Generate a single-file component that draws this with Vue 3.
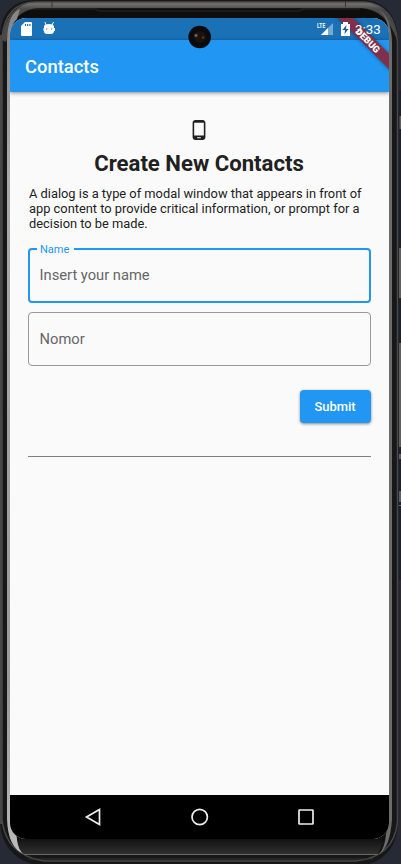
<script setup>
import { ref } from 'vue'
const name = ref('')
const number = ref('')
</script>

<template>
  <div class="stage">
    <svg class="frame" width="401" height="864" viewBox="0 0 401 864" aria-hidden="true">
      <defs>
        <linearGradient id="topBand" gradientUnits="userSpaceOnUse" x1="0" y1="1" x2="0" y2="9">
          <stop offset="0" stop-color="#333" /><stop offset=".35" stop-color="#737170" /><stop offset="1" stop-color="#4c4a49" />
        </linearGradient>
        <linearGradient id="bottomBand" x1="0" y1="0" x2="0" y2="1">
          <stop offset="0" stop-color="#101010" /><stop offset="1" stop-color="#303030" />
        </linearGradient>
        <linearGradient id="shineLeft" x1="0" y1="0" x2="0" y2="1">
          <stop offset="0" stop-color="#858585" /><stop offset=".2" stop-color="#aaa" /><stop offset=".8" stop-color="#999" /><stop offset="1" stop-color="#bbb" />
        </linearGradient>
      </defs>
      <rect width="401" height="864" fill="#252a35" />
      <rect x="399" y="90" width="2" height="490" fill="#19202e" />
      <path d="M0 33Q3 1 34 0H366Q397 4 398.5 42V822Q396 862 358 866H40Q3 859 0 823Z" fill="#171717" />
      <path d="M2 38Q5 3 35 2H365Q395 5 397.500 42V822Q394 857 356 861H44Q6 855 2 820Z" fill="none" stroke="#484848" stroke-width="1.500" />
      <path d="M0 35V824" stroke="#474747" stroke-width="4" />
      <path d="M2 40Q6 4 36 2H364Q393 5 397 40Q386 9 361 8H40Q11 9 6 42Z" fill="url(#topBand)" />
      <path d="M52 1V7M345.500 1V7" stroke="#343434" />
      <path d="M37 9H363Q388 11 391 41V819Q389 851 354 854H46Q14 851 7 819V41Q11 12 37 9Z" fill="#0d0d0d" />
      <path d="M20 9Q8 13 7 40V819Q8 848 24 854Q18 849 16 833L10 823V36Q11 24 17 19Z" fill="url(#shineLeft)" />
      <path d="M378 10Q388 15 389 37V824L386 834Q385 848 379 854Q390 848 392 819V42Q391 15 378 10Z" fill="#6c6c6c" />
      <path d="M34 9H95L99 11H300L303 9H360" stroke="#292929" fill="none" />
      <path d="M20 838H382Q381 851 377 854H24Q18 851 17 838Z" fill="url(#bottomBand)" />
      <path d="M24 854.500H378" stroke="#676767" />
      <path d="M29 859H373" stroke="#353535" />
      <path d="M400.500 116V129M400 248V298M400 343V447M400 454V459M400 491V502" stroke="#5e5e5e" stroke-width="2" />
      <path d="M399 505.500H401" stroke="#4778bb" />
    </svg>

    <main class="screen">
      <div class="status">
        <svg class="sd" width="12" height="15" viewBox="0 0 12 15"><path d="M4 0H10Q11 0 11 1V13Q11 14 10 14H1Q0 14 0 13V4Z" fill="#fff" /><path d="M4.500 2V4M6.700 2V4M8.900 2V4" stroke="#1b71b6" stroke-width="1.200" /></svg>
        <svg class="android" width="13" height="14" viewBox="0 0 13 14"><path d="M3 3L2 0M9 3L10.500 0" stroke="#fff" /><path d="M1 4Q2 2 6 2Q10 2 11 4V10Q10 12 8 12H4Q1 12 1 9Z" fill="#fff" /><path d="M0 6V9M11.500 6V9" stroke="#fff" /><path d="M3 7H4.200M8 7H9.200" stroke="#1b71b6" stroke-width="1.200" /></svg>
        <span class="lte">LTE</span>
        <svg class="signal" width="12" height="12" viewBox="0 0 12 12"><path d="M12 0V12H0Z" fill="#76aad3" /><path d="M7 5V12H0Z" fill="#fff" /></svg>
        <svg class="battery" width="9" height="14" viewBox="0 0 9 14"><path d="M0 2H2V0H7V2H9V14H0Z" fill="#fff" /><path d="M5.500 3L1.500 8H4L3.500 12L7.500 7H5Z" fill="#195b94" /></svg>
        <span class="time">3:33</span>
      </div>
      <header class="bar">Contacts</header>
      <section class="content">
        <svg class="phone" width="24" height="24" viewBox="0 0 24 24"><path d="M16 1H8C6.340 1 5 2.340 5 4v16c0 1.660 1.340 3 3 3h8c1.660 0 3-1.340 3-3V4c0-1.660-1.340-3-3-3zm-2 20h-4v-1h4v1zm3.250-3H6.750V4h10.500v14z" fill="#212121" /></svg>
        <h1>Create New Contacts</h1>
        <p>A dialog is a type of modal window that appears in front of app content to provide critical information, or prompt for a decision to be made.</p>
        <fieldset class="field active">
          <legend>Name</legend>
          <input v-model="name" placeholder="Insert your name" aria-label="Name">
        </fieldset>
        <div class="field plain"><input v-model="number" placeholder="Nomor" aria-label="Nomor"></div>
        <button type="button">Submit</button>
        <hr>
      </section>
      <nav class="nav">
        <svg width="18" height="18" viewBox="0 0 18 18"><path d="M15.500 1.500V16.500L2.500 9Z" /></svg>
        <svg width="18" height="18" viewBox="0 0 18 18"><circle cx="8.700" cy="9" r="7.700" /></svg>
        <svg width="18" height="18" viewBox="0 0 18 18"><rect x="2" y="2" width="14" height="14" rx=".5" /></svg>
      </nav>
      <div class="ribbon"><span>DEBUG</span></div>
    </main>
    <svg class="camera" width="24" height="24" viewBox="0 0 24 24"><circle cx="11.700" cy="12" r="11.300" fill="#0b0b0c" /><circle cx="12" cy="12" r="6" fill="#191310" /><circle cx="8" cy="10.500" r="2" fill="#45383a" /><circle cx="8" cy="10.500" r=".7" fill="#b5a5a5" /><circle cx="15" cy="12.500" r="1.300" fill="#5a3818" /></svg>
  </div>
</template>

<style>
body { margin: 0; overflow: hidden; }
</style>

<style scoped>
* { box-sizing: border-box; }
.stage { position: relative; width: 401px; height: 864px; padding: 18px 12px 25px 10px; overflow: hidden; font-family: Roboto, sans-serif; }
.frame { position: absolute; inset: 0; }
.screen { position: relative; display: flex; flex-direction: column; width: 379px; height: 821px; border-radius: 16px; overflow: hidden; background: #fafafa; }
.status { height: 22px; flex: none; background: #1b71b6; color: #fff; display: flex; align-items: flex-start; padding: 4px 7px 0 11px; }
.android { margin-left: 10px; }
.lte { width: 9px; margin: 1px 0 0 auto; font-size: 7px; line-height: 7px; font-weight: 700; letter-spacing: .3px; transform: scaleX(.7); transform-origin: left; }
.signal { margin: 1px 0 0 -5px; }
.battery { position: relative; z-index: 2; margin-left: 8px; }
.time { position: relative; z-index: 2; margin-left: 5px; width: 27px; font-size: 13.300px; line-height: 15px; white-space: nowrap; }
.bar { position: relative; height: 52px; flex: none; padding-left: 15px; color: #fff; background: #2196f3; box-shadow: 0 1px 4px #0007; font-size: 18.400px; font-weight: 500; line-height: 53px; }
.content { flex: 1; display: flex; flex-direction: column; padding: 27px 18px 0 18px; }
.phone { align-self: center; width: 22px; height: 22px; margin-right: 1px; }
h1 { margin: 9px 1px 0 0; font-size: 22.150px; line-height: 26px; font-weight: 700; color: #212121; text-align: center; white-space: nowrap; }
p { margin: 11px 0 0 1px; font-size: 12.850px; line-height: 14.800px; color: #212121; }
.field { width: 343px; margin: 0; padding: 0 11px; border-radius: 4px; flex: none; }
.active { position: relative; height: 60px; margin-top: 12px; border: 2px solid #2196f3; padding: 0 9px 0 7px; }
legend { height: 12px; margin: 0; padding: 0 5px 0 3px; font-size: 11px; line-height: 13px; color: #2196f3; }
input { display: block; width: 100%; padding: 0; border: 0; outline: 0; background: transparent; color: #212121; font: 14.700px/20px Roboto, sans-serif; }
input::placeholder { color: #666; opacity: 1; }
.active input { margin: 10px 0 0 2.600px; }
.plain { height: 54px; margin-top: 9px; border: 1px solid #999; padding: 16px 10.600px; }
button { align-self: flex-end; flex: none; width: 71px; height: 33px; margin-top: 24px; padding: 0 1px 0 0; border: 0; border-radius: 4px; background: #2196f3; color: #fff; box-shadow: 0 1px 3px #0007; font: 500 12.900px/34px Roboto, sans-serif; }
hr { width: 343px; height: 1px; margin: 33px 0 0; border: 0; background: #7f7f7f; flex: none; }
.nav { height: 44px; flex: none; display: flex; justify-content: space-between; align-items: center; padding: 0 74px; background: #000; }
.nav svg { fill: none; stroke: #eee; stroke-width: 1.700; }
.ribbon { position: absolute; top: 17px; right: -29px; width: 100px; height: 11px; background: #7f314b; box-shadow: 0 0 4px #0006; transform: rotate(45deg); color: #fff; font-size: 9.400px; line-height: 11px; font-weight: 900; text-align: center; }
.camera { position: absolute; left: 188px; top: 25px; }
</style>
